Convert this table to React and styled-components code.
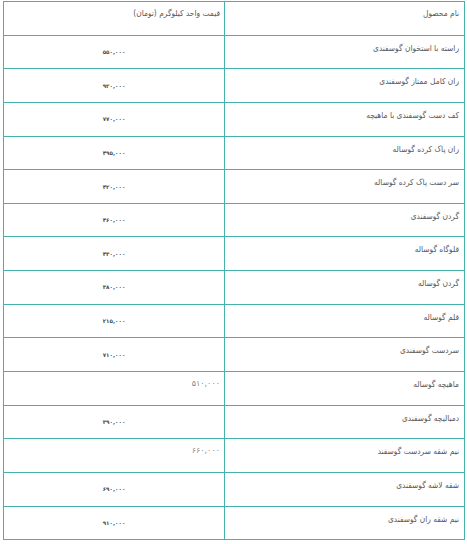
import React from "react";
import styled, { createGlobalStyle } from "styled-components";

const Global = createGlobalStyle`
  html, body { margin: 0; padding: 0; background: #fff; }
  body { font-family: "DejaVu Sans Condensed", "DejaVu Sans", sans-serif; }
`;

const Page = styled.div`
  padding: 1px 2px 0 3px;
  width: 467px;
  box-sizing: border-box;
`;

const Table = styled.table`
  direction: rtl;
  width: 462px;
  border-collapse: collapse;
  table-layout: fixed;
  color: #5a5a5a;
`;

const Row = styled.tr`
  height: 33.65px;
`;

const NameCell = styled.td`
  box-sizing: border-box;
  width: 240px;
  border: 1px solid #45b2b0;
  padding: 6px 5px 0 5px;
  vertical-align: top;
  text-align: right;
  font-size: 8.3px;
  line-height: 12px;
  white-space: nowrap;
`;

const HeadCell = styled(NameCell)`
  padding-top: 5px;
`;

const PriceHeadCell = styled(HeadCell)`
  width: auto;
  padding-right: 4px;
`;

const PriceCell = styled.td`
  border: 1px solid #45b2b0;
  padding: ${(p) => (p.$wide ? "7px 4px 0 4px" : "0 4px")};
  vertical-align: ${(p) => (p.$wide ? "top" : "middle")};
  text-align: ${(p) => (p.$wide ? "right" : "center")};
  font-family: "DejaVu Sans", sans-serif;
  font-size: ${(p) => (p.$wide ? "8px" : "5.6px")};
  letter-spacing: ${(p) => (p.$wide ? "0.9px" : "0")};
  color: ${(p) => (p.$wide ? "#8a8a8a" : "#4a4a4a")};
  font-weight: ${(p) => (p.$wide ? "normal" : "bold")};
  line-height: 10px;
  white-space: nowrap;
`;

const rows = [
  ["راسته با استخوان گوسفندی", "۵۵۰,۰۰۰"],
  ["ران کامل ممتاز گوسفندی", "۹۲۰,۰۰۰"],
  ["کف دست گوسفندی با ماهیچه", "۷۷۰,۰۰۰"],
  ["ران پاک کرده گوساله", "۴۹۵,۰۰۰"],
  ["سر دست پاک کرده گوساله", "۴۲۰,۰۰۰"],
  ["گردن گوسفندی", "۴۶۰,۰۰۰"],
  ["قلوگاه گوساله", "۴۳۰,۰۰۰"],
  ["گردن گوساله", "۳۸۰,۰۰۰"],
  ["قلم گوساله", "۲۱۵,۰۰۰"],
  ["سردست گوسفندی", "۷۱۰,۰۰۰"],
  ["ماهیچه گوساله", "۵۱۰,۰۰۰", true],
  ["دمبالیچه گوسفندی", "۳۹۰,۰۰۰"],
  ["نیم شقه سردست گوسفند", "۶۶۰,۰۰۰", true],
  ["شقه لاشه گوسفندی", "۶۹۰,۰۰۰"],
  ["نیم شقه ران گوسفندی", "۹۱۰,۰۰۰"],
];

export default function App() {
  return (
    <>
      <Global />
      <Page>
        <Table>
          <tbody>
            <Row>
              <HeadCell>نام محصول</HeadCell>
              <PriceHeadCell>قیمت واحد کیلوگرم (تومان)</PriceHeadCell>
            </Row>
            {rows.map(([name, price, wide]) => (
              <Row key={name}>
                <NameCell>{name}</NameCell>
                <PriceCell $wide={wide}>{price}</PriceCell>
              </Row>
            ))}
          </tbody>
        </Table>
      </Page>
    </>
  );
}
